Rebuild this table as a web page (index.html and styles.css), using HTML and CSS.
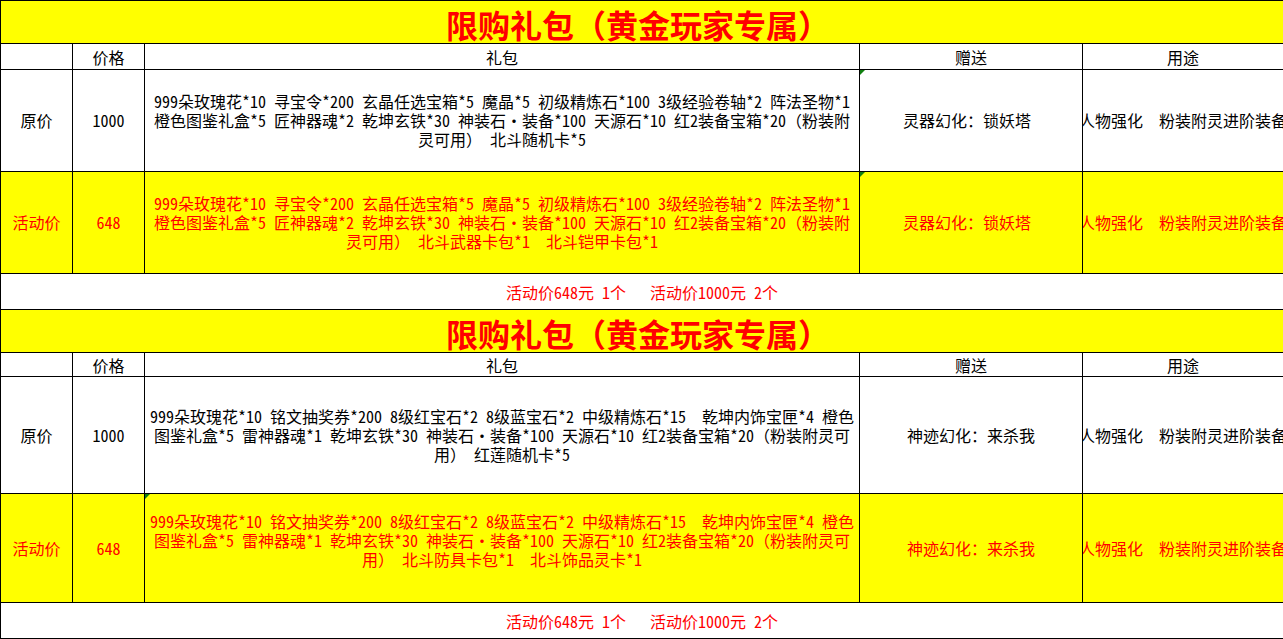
FILE: index.html
```html
<!DOCTYPE html>
<html lang="zh-CN">
<head>
<meta charset="utf-8">
<title>限购礼包</title>
<link rel="stylesheet" href="styles.css">
</head>
<body>
<div class="sheet">
  <section class="block b1">
    <div class="cell title">限购礼包（黄金玩家专属）</div>
    <div class="cell hd"></div>
    <div class="cell hd">价格</div>
    <div class="cell hd">礼包</div>
    <div class="cell hd">赠送</div>
    <div class="cell hd last">用途</div>

    <div class="cell">原价</div>
    <div class="cell">1000</div>
    <div class="cell gift"><div class="lines"><span class="ln">999朵玫瑰花*10 寻宝令*200 玄晶任选宝箱*5 魔晶*5 初级精炼石*100 3级经验卷轴*2 阵法圣物*1</span><span class="ln">橙色图鉴礼盒*5 匠神器魂*2 乾坤玄铁*30 神装石·装备*100 天源石*10 红2装备宝箱*20（粉装附</span><span class="ln">灵可用） 北斗随机卡*5</span></div></div>
    <div class="cell tri shift">灵器幻化：锁妖塔</div>
    <div class="cell use last"><span class="ln">人物强化　粉装附灵进阶装备</span></div>

    <div class="cell hl">活动价</div>
    <div class="cell hl">648</div>
    <div class="cell hl gift"><div class="lines"><span class="ln">999朵玫瑰花*10 寻宝令*200 玄晶任选宝箱*5 魔晶*5 初级精炼石*100 3级经验卷轴*2 阵法圣物*1</span><span class="ln">橙色图鉴礼盒*5 匠神器魂*2 乾坤玄铁*30 神装石·装备*100 天源石*10 红2装备宝箱*20（粉装附</span><span class="ln">灵可用） 北斗武器卡包*1  北斗铠甲卡包*1</span></div></div>
    <div class="cell hl tri shift">灵器幻化：锁妖塔</div>
    <div class="cell hl use last"><span class="ln">人物强化　粉装附灵进阶装备</span></div>

    <div class="cell sum last"><span class="ln">活动价648元 1个   活动价1000元 2个</span></div>
  </section>

  <section class="block b2">
    <div class="cell title">限购礼包（黄金玩家专属）</div>
    <div class="cell hd"></div>
    <div class="cell hd">价格</div>
    <div class="cell hd">礼包</div>
    <div class="cell hd">赠送</div>
    <div class="cell hd last">用途</div>

    <div class="cell">原价</div>
    <div class="cell">1000</div>
    <div class="cell gift"><div class="lines"><span class="ln">999朵玫瑰花*10 铭文抽奖券*200 8级红宝石*2 8级蓝宝石*2 中级精炼石*15  乾坤内饰宝匣*4 橙色</span><span class="ln">图鉴礼盒*5 雷神器魂*1 乾坤玄铁*30 神装石·装备*100 天源石*10 红2装备宝箱*20（粉装附灵可</span><span class="ln">用） 红莲随机卡*5</span></div></div>
    <div class="cell">神迹幻化：来杀我</div>
    <div class="cell use last"><span class="ln">人物强化　粉装附灵进阶装备</span></div>

    <div class="cell hl">活动价</div>
    <div class="cell hl">648</div>
    <div class="cell hl gift tri raise"><div class="lines"><span class="ln">999朵玫瑰花*10 铭文抽奖券*200 8级红宝石*2 8级蓝宝石*2 中级精炼石*15  乾坤内饰宝匣*4 橙色</span><span class="ln">图鉴礼盒*5 雷神器魂*1 乾坤玄铁*30 神装石·装备*100 天源石*10 红2装备宝箱*20（粉装附灵可</span><span class="ln">用） 北斗防具卡包*1  北斗饰品灵卡*1</span></div></div>
    <div class="cell hl">神迹幻化：来杀我</div>
    <div class="cell hl use last"><span class="ln">人物强化　粉装附灵进阶装备</span></div>

    <div class="cell sum last"><span class="ln">活动价648元 1个   活动价1000元 2个</span></div>
  </section>
</div>
</body>
</html>
```

FILE: styles.css
```css
html, body {
  margin: 0;
  padding: 0;
  background: #ffffff;
}

.sheet {
  width: 1283px;
  border-left: 1px solid #000;
  box-sizing: border-box;
  font-family: "Noto Sans Mono CJK SC", "Noto Sans CJK SC", "DejaVu Sans", sans-serif;
  font-size: 16px;
  line-height: 19px;
  color: #000;
}

.block {
  display: grid;
  grid-template-columns: 72px 72px 715px 223px 200px;
}

.b1 {
  border-top: 1px solid #000;
  grid-template-rows: 43px 26px 102px 102px 36px;
}

.b2 {
  grid-template-rows: 43px 24px 117px 109px 36px;
}

.cell {
  position: relative;
  display: flex;
  align-items: center;
  justify-content: center;
  text-align: center;
  white-space: nowrap;
  overflow: hidden;
  border-right: 1px solid #000;
  border-bottom: 1px solid #000;
  min-width: 0;
}

.cell.last {
  border-right: 0;
}

.ln {
  white-space: pre;
}

.lines .ln {
  display: block;
}

.title {
  grid-column: 1 / -1;
  border-right: 0;
  overflow: visible;
  background: #ffff00;
  color: #ff0000;
  font-size: 32px;
  font-weight: bold;
  line-height: 36px;
  padding: 3px 8px 0 0;
}

.hd {
  padding-top: 1px;
}

.hl {
  background: #ffff00;
  color: #ff0000;
}

.sum {
  grid-column: 1 / -1;
  color: #ff0000;
  padding-top: 2px;
}

.shift {
  padding-right: 8px;
}

.raise {
  padding-bottom: 16px;
}

.tri::before {
  content: "";
  position: absolute;
  left: 0;
  top: 0;
  width: 0;
  height: 0;
  border-top: 5px solid #108010;
  border-right: 5px solid transparent;
}
```
